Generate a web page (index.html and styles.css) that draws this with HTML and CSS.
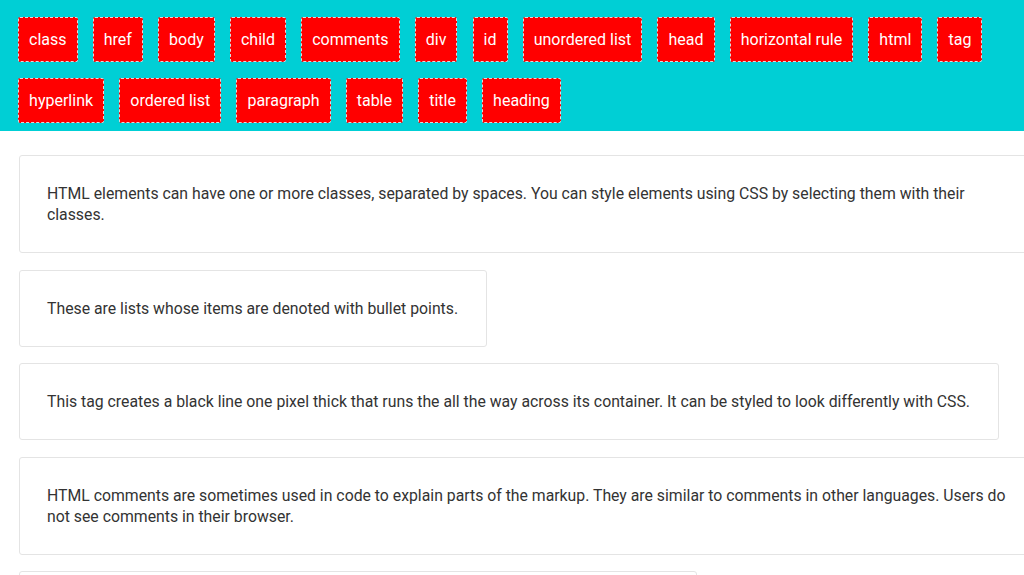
FILE: index.html
```html
<!DOCTYPE html>
<html lang="en">
<head>
<meta charset="UTF-8">
<title>HTML Terms</title>
<link rel="stylesheet" href="styles.css">
</head>
<body>

    <!-- Term buttons -->
    <div class="terms">
        <button class="term">class</button>
        <button class="term">href</button>
        <button class="term">body</button>
        <button class="term">child</button>
        <button class="term">comments</button>
        <button class="term">div</button>
        <button class="term">id</button>
        <button class="term">unordered list</button>
        <button class="term">head</button>
        <button class="term">horizontal rule</button>
        <button class="term">html</button>
        <button class="term">tag</button>
        <button class="term">hyperlink</button>
        <button class="term">ordered list</button>
        <button class="term">paragraph</button>
        <button class="term">table</button>
        <button class="term">title</button>
        <button class="term">heading</button>
    </div>

    <!-- Definitions -->
    <div class="cards">
        <div class="card"><p>HTML elements can have one or more classes, separated by spaces. You can style elements using CSS by selecting them with their classes.</p></div>
        <div class="card"><p>These are lists whose items are denoted with bullet points.</p></div>
        <div class="card"><p>This tag creates a black line one pixel thick that runs the all the way across its container. It can be styled to look differently with CSS.</p></div>
        <div class="card"><p>HTML comments are sometimes used in code to explain parts of the markup. They are similar to comments in other languages. Users do not see comments in their browser.</p></div>
        <div class="card"><p>This is the root element of an HTML document. All other elements are nested inside of it.</p></div>
    </div>

</body>
</html>
```

FILE: styles.css
```css
body {
    margin: 0;
    padding: 0;
    background-color: #fff;
    font-family: Roboto, 'Liberation Sans', sans-serif;
    color: #333;
    overflow: hidden;
}

.terms {
    background-color: #00cfd5;
    padding: 9px 10px 0 10.5px;
    display: flex;
    flex-wrap: wrap;
}

.term {
    background-color: #f00;
    color: #fff;
    font-family: Roboto, 'Liberation Sans', sans-serif;
    font-size: 16px;
    line-height: 19px;
    padding: 12px 10px;
    margin: 8px 7.6px;
    border: 1px dashed #ddd;
    border-radius: 2px;
    cursor: pointer;
    outline: none;
}

.cards {
    padding: 24px 0 0 19px;
}

.card {
    width: max-content;
    max-width: 972px;
    padding: 27px 28px 27px 27px;
    margin-bottom: 16.5px;
    border: 1px solid #e4e4e4;
    border-radius: 3px;
    font-size: 15.8px;
    line-height: 21px;
}

.card p {
    margin: 0;
}
```
